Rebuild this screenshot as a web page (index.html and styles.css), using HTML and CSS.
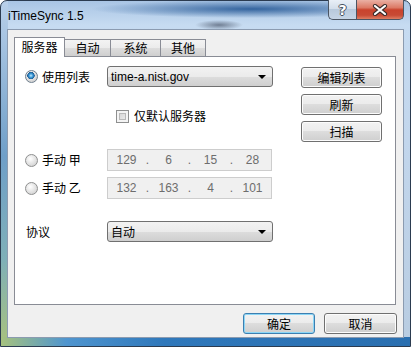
FILE: index.html
```html
<!DOCTYPE html>
<html lang="zh-CN">
<head>
    <meta charset="UTF-8">
    <title>iTimeSync 1.5</title>
    <link rel="stylesheet" href="styles.css">
</head>
<body>
    <div class="window">
        <div class="titlebar">
            <span class="title">iTimeSync 1.5</span>
            <div class="caption-buttons">
                <span class="cap help">?</span>
                <span class="cap close">
                    <svg width="16" height="12" viewBox="0 0 16 12">
                        <path d="M3 2 L13 10 M13 2 L3 10" stroke="#3a2a28" stroke-width="4.2" stroke-linecap="round"/>
                        <path d="M3 2 L13 10 M13 2 L3 10" stroke="#ffffff" stroke-width="2.2" stroke-linecap="round"/>
                    </svg>
                </span>
            </div>
        </div>
        <div class="client">
            <div class="tab-strip">
                <span class="tab active">服务器</span>
                <span class="tab">自动</span>
                <span class="tab">系统</span>
                <span class="tab">其他</span>
            </div>
            <div class="panel">
                <div class="panel-left">
                    <div class="row row-list">
                        <span class="opt"><span class="radio checked"></span>使用列表</span>
                        <div class="combo"><span class="value latin">time-a.nist.gov</span><span class="arrow"></span></div>
                    </div>
                    <div class="row row-check">
                        <span class="check"></span>仅默认服务器
                    </div>
                    <div class="row row-ip">
                        <span class="opt"><span class="radio"></span>手动 甲</span>
                        <div class="ip latin">
                            <span>129</span><i>.</i><span>6</span><i>.</i><span>15</span><i>.</i><span>28</span>
                        </div>
                    </div>
                    <div class="row row-ip second">
                        <span class="opt"><span class="radio"></span>手动 乙</span>
                        <div class="ip latin">
                            <span>132</span><i>.</i><span>163</span><i>.</i><span>4</span><i>.</i><span>101</span>
                        </div>
                    </div>
                    <div class="row row-proto">
                        <span class="opt label">协议</span>
                        <div class="combo"><span class="value">自动</span><span class="arrow"></span></div>
                    </div>
                </div>
                <div class="panel-right">
                    <button class="btn">编辑列表</button>
                    <button class="btn">刷新</button>
                    <button class="btn">扫描</button>
                </div>
            </div>
            <div class="footer">
                <button class="btn default">确定</button>
                <button class="btn">取消</button>
            </div>
        </div>
    </div>
</body>
</html>
```

FILE: styles.css
```css
body {
    margin: 0;
    background-color: #ffffff;
    font-family: "Noto Sans CJK SC", sans-serif;
    font-size: 12px;
    color: #000000;
}
.latin {
    font-family: "Liberation Sans", "Noto Sans CJK SC", sans-serif;
}
.window {
    width: 411px;
    height: 347px;
    box-sizing: border-box;
    border: 1px solid #2b3b50;
    border-radius: 7px 7px 0 0;
    padding: 0 6px 8px 6px;
    display: flex;
    flex-direction: column;
    background:
        linear-gradient(90deg, #a6c27e 0, #4f95cf 16%, #2f78bb 40%, #2a6fb0 100%) bottom / 100% 9px no-repeat,
        linear-gradient(180deg, #b9d0ea 0, #6f9fc8 45%, #7fb0b8 75%, #a9c27c 100%) left / 7px 100% no-repeat,
        radial-gradient(ellipse 160px 9px at 250px 8px, rgba(30, 82, 145, 0.85), rgba(30, 82, 145, 0)),
        radial-gradient(ellipse 24px 5px at 218px 24px, rgba(55, 65, 85, 0.6), rgba(55, 65, 85, 0)),
        linear-gradient(180deg, #a9c5e5 0, #c6dbf1 24px, #c2d6ec 140px, #b8cce1 100%);
}
.titlebar {
    height: 28px;
    display: flex;
    justify-content: space-between;
    align-items: flex-start;
}
.title {
    font-family: "Liberation Sans", sans-serif;
    font-size: 12px;
    margin: 8px 0 0 1px;
    color: #000000;
}
.caption-buttons {
    display: flex;
    margin-top: -1px;
}
.cap {
    height: 20px;
    box-sizing: border-box;
    border: 1px solid #4b5563;
    border-top: none;
    display: flex;
    justify-content: center;
    align-items: center;
}
.help {
    width: 28px;
    border-right: none;
    border-radius: 0 0 0 5px;
    background: linear-gradient(180deg, #e9eff7 0, #d3deeb 45%, #b8c9dc 50%, #c6d5e6 100%);
    font-family: "DejaVu Sans", sans-serif;
    font-weight: bold;
    font-size: 14px;
    color: #ffffff;
    text-shadow: -1px 0 #45505e, 1px 0 #45505e, 0 -1px #45505e, 0 1px #45505e;
}
.close {
    width: 48px;
    border-radius: 0 0 5px 0;
    background: linear-gradient(180deg, #eab0a4 0, #dc7a66 40%, #c9432d 52%, #c84a34 80%, #de7d62 100%);
}
.client {
    flex: 1;
    box-sizing: border-box;
    border: 1px solid #8b9bb0;
    background-color: #f0f0f0;
    padding: 7px 7px 3px 6px;
    display: flex;
    flex-direction: column;
}
.tab-strip {
    display: flex;
    align-items: flex-end;
    height: 20px;
    margin-bottom: -1px;
    position: relative;
    z-index: 1;
}
.tab {
    box-sizing: border-box;
    height: 18px;
    border: 1px solid #898c95;
    border-left: none;
    background: linear-gradient(180deg, #f3f3f3 0, #ebebeb 50%, #dddddd 50%, #cfcfcf 100%);
    display: flex;
    justify-content: center;
    align-items: center;
    line-height: 1;
}
.tab:nth-child(2) { width: 46px; }
.tab:nth-child(3) { width: 50px; }
.tab:nth-child(4) { width: 45px; }
.tab.active {
    width: 51px;
    height: 20px;
    border-left: 1px solid #898c95;
    border-bottom: none;
    background: #ffffff;
    padding-bottom: 1px;
}
.panel {
    height: 249px;
    box-sizing: border-box;
    border: 1px solid #898c95;
    background-color: #ffffff;
    padding: 9px 13px 0 10px;
    display: flex;
    justify-content: space-between;
}
.panel-left {
    display: flex;
    flex-direction: column;
}
.row {
    display: flex;
    align-items: center;
}
.opt {
    width: 82px;
    display: flex;
    align-items: center;
    line-height: 1;
}
.opt.label {
    padding-left: 1px;
    box-sizing: border-box;
}
.radio {
    width: 11px;
    height: 11px;
    border: 1px solid #8e8f8f;
    border-radius: 50%;
    margin-right: 4px;
    background: radial-gradient(circle at 40% 35%, #ffffff 0, #e4e4e4 50%, #c8c8c8 100%);
    box-sizing: content-box;
}
.radio.checked {
    background:
        radial-gradient(circle at 45% 42%, #c4e8fb 0, #3a9ad9 22%, #1d5a90 40%, rgba(0, 0, 0, 0) 44%),
        radial-gradient(circle at 40% 35%, #ffffff 0, #e0e0e0 50%, #c4c4c4 100%);
    border-color: #6f7f8e;
}
.row-list {
    height: 21px;
}
.combo {
    width: 166px;
    height: 21px;
    box-sizing: border-box;
    border: 1px solid #707070;
    border-radius: 3px;
    background: linear-gradient(180deg, #f2f2f2 0, #ebebeb 50%, #dddddd 50%, #cfcfcf 100%);
    display: flex;
    justify-content: space-between;
    align-items: center;
    padding: 0 6px 0 3px;
    line-height: 1;
}
.arrow {
    width: 0;
    height: 0;
    border-left: 4px solid transparent;
    border-right: 4px solid transparent;
    border-top: 4px solid #000000;
}
.row-check {
    height: 20px;
    margin-top: 19px;
    padding-left: 91px;
    line-height: 1;
}
.check {
    width: 11px;
    height: 11px;
    border: 1px solid #8e8f8f;
    margin-right: 5px;
    background: linear-gradient(135deg, #cfcfcf 0, #f2f2f2 100%);
    box-shadow: inset 0 0 0 2px #f4f4f4, inset 0 0 0 3px #b9b9b9;
}
.row-ip {
    height: 22px;
    margin-top: 23px;
}
.row-ip.second {
    margin-top: 6px;
}
.ip {
    width: 165px;
    height: 22px;
    box-sizing: border-box;
    border: 1px solid #cdcdcd;
    background-color: #f0f0f0;
    color: #6d6d6d;
    display: flex;
    align-items: center;
    padding-left: 1px;
    font-size: 12px;
}
.ip span {
    width: 35px;
    text-align: center;
}
.ip i {
    font-style: normal;
    width: 7px;
    text-align: center;
}
.row-proto {
    height: 21px;
    margin-top: 22px;
}
.panel-right {
    display: flex;
    flex-direction: column;
    gap: 6px;
    padding-top: 1px;
}
.btn {
    width: 81px;
    height: 21px;
    box-sizing: border-box;
    border: 1px solid #707070;
    border-radius: 3px;
    background: linear-gradient(180deg, #f2f2f2 0, #ebebeb 50%, #dddddd 50%, #cfcfcf 100%);
    box-shadow: inset 0 0 0 1px #fcfcfc;
    font-family: "Noto Sans CJK SC", sans-serif;
    font-size: 12px;
    font-weight: 400;
    color: #000000;
    padding: 0;
    line-height: 1;
}
.footer {
    display: flex;
    justify-content: flex-end;
    gap: 9px;
    margin-top: 8px;
    margin-right: -1px;
}
.footer .btn {
    width: 72px;
}
.footer .btn:last-child {
    width: 73px;
}
.btn.default {
    border-color: #3c7fb1;
    box-shadow: inset 0 0 0 1px #8cd6f6;
}
```
